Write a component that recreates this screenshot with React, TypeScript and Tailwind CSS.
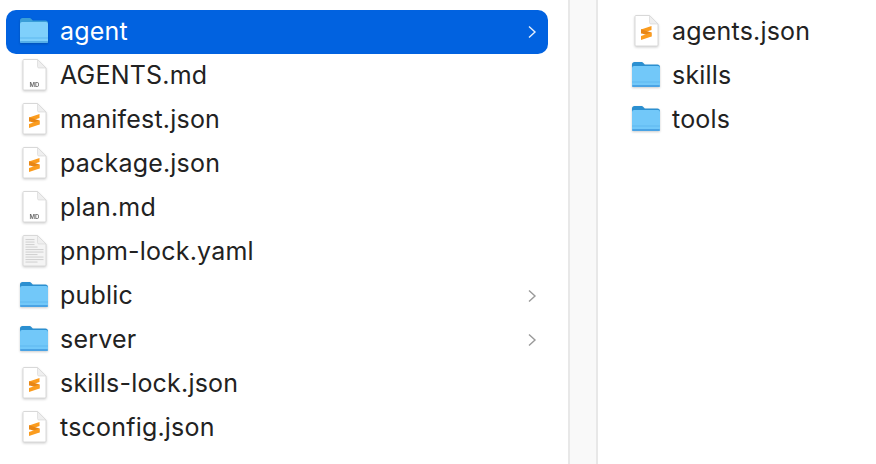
import React from 'react';

function FolderIcon({ selected }: { selected?: boolean }) {
  return (
    <svg width="30" height="28" viewBox="0 0 30 28" className="shrink-0 drop-shadow-[0_1px_1px_rgba(0,0,0,0.2)]">
      <path d="M1 3.500C1 2 2 1 3.500 1H10c1.200 0 1.900.4 2.600 1.200l1.200 1.300H26.500C28 3.500 29 4.500 29 6V11H1z" fill={selected ? '#3a9ed8' : '#2b8fd0'} />
      <rect x="1" y="5" width="28" height="21" rx="2" fill={selected ? '#7fd0fb' : '#72c8f9'} />
      <rect x="1" y="20.500" width="28" height="1" fill="#5fb8f0" />
      <rect x="1" y="24" width="28" height="2" rx="1" fill={selected ? '#55aee8' : '#4aa3e4'} />
    </svg>
  );
}

function PageShape({ children, tint }: { children?: React.ReactNode; tint?: boolean }) {
  return (
    <svg width="26" height="32" viewBox="0 0 26 32" className="shrink-0 drop-shadow-[0_1px_1px_rgba(0,0,0,0.18)]">
      <path d="M2 1.500a1 1 0 0 1 1-1H16.500L25 9v21a1 1 0 0 1-1 1H3a1 1 0 0 1-1-1z" fill={tint ? '#f4f4f4' : '#fff'} stroke="#d8d8d8" />
      <path d="M16.500 .5V7.500a1.500 1.500 0 0 0 1.500 1.500H25z" fill="#efefef" stroke="#d8d8d8" strokeWidth="0.700" />
      {children}
    </svg>
  );
}

function SublimeIcon() {
  return (
    <PageShape>
      <path d="M8 14.500L18.500 11V15L8 18.500Z" fill="#fb9c1e" />
      <path d="M8 18.200L18.500 21.500V17.500L8 14.200Z" fill="#e88614" />
      <path d="M8 21L18.500 17.500V21.500L8 25Z" fill="#fb9c1e" />
    </PageShape>
  );
}

function MdIcon() {
  return (
    <PageShape>
      <text x="13.500" y="27.500" textAnchor="middle" fontSize="6" fontWeight="600" fill="#666" fontFamily="Inter, sans-serif">MD</text>
    </PageShape>
  );
}

function TextDocIcon() {
  const lines = [4, 6.500, 9, 11.500, 14, 16.500, 19, 21.500, 24, 26.500];
  return (
    <PageShape tint>
      {lines.map((y, i) => (
        <rect key={y} x="4.500" y={y} width={i < 3 ? 9 : i % 3 === 0 ? 12 : 18} height="1.100" fill="#d2d2d2" />
      ))}
    </PageShape>
  );
}

function Chevron({ selected }: { selected?: boolean }) {
  return (
    <svg width="10" height="14" viewBox="0 0 10 14" className="shrink-0">
      <path d="M2 1.500L8 7L2 12.500" fill="none" stroke={selected ? '#e4eefc' : '#9a9a9a'} strokeWidth="1.400" />
    </svg>
  );
}

type Item = { name: string; icon: 'folder' | 'sublime' | 'md' | 'text'; arrow?: boolean; selected?: boolean };

const leftItems: Item[] = [
  { name: 'agent', icon: 'folder', arrow: true, selected: true },
  { name: 'AGENTS.md', icon: 'md' },
  { name: 'manifest.json', icon: 'sublime' },
  { name: 'package.json', icon: 'sublime' },
  { name: 'plan.md', icon: 'md' },
  { name: 'pnpm-lock.yaml', icon: 'text' },
  { name: 'public', icon: 'folder', arrow: true },
  { name: 'server', icon: 'folder', arrow: true },
  { name: 'skills-lock.json', icon: 'sublime' },
  { name: 'tsconfig.json', icon: 'sublime' },
];

const rightItems: Item[] = [
  { name: 'agents.json', icon: 'sublime' },
  { name: 'skills', icon: 'folder' },
  { name: 'tools', icon: 'folder' },
];

function Row({ item }: { item: Item }) {
  return (
    <div className={`flex h-11 items-center rounded-[10px] pr-[11px] ${item.selected ? 'bg-[#0162e0] text-white' : 'text-[#222222]'}`}>
      <div className="mb-[3px] flex w-[54px] justify-center pl-[2px]">
        {item.icon === 'folder' && <FolderIcon selected={item.selected} />}
        {item.icon === 'sublime' && <SublimeIcon />}
        {item.icon === 'md' && <MdIcon />}
        {item.icon === 'text' && <TextDocIcon />}
      </div>
      <span className="mb-[2px] flex-1 text-[25px] leading-none tracking-[0.2px]">{item.name}</span>
      {item.arrow && <Chevron selected={item.selected} />}
    </div>
  );
}

export default function App() {
  return (
    <div className="flex h-[464px] w-[876px] overflow-hidden bg-white font-['Inter',sans-serif]">
      <div className="w-[568px] shrink-0 px-[6px] pr-[20px] pt-[10px]">
        {leftItems.map((item) => (
          <Row key={item.name} item={item} />
        ))}
      </div>
      <div className="w-[30px] shrink-0 border-x-2 border-[#e8e8e8] bg-[#f9f9f9]" />
      <div className="flex-1 pl-[20px] pr-[6px] pt-[10px]">
        {rightItems.map((item) => (
          <Row key={item.name} item={item} />
        ))}
      </div>
    </div>
  );
}
